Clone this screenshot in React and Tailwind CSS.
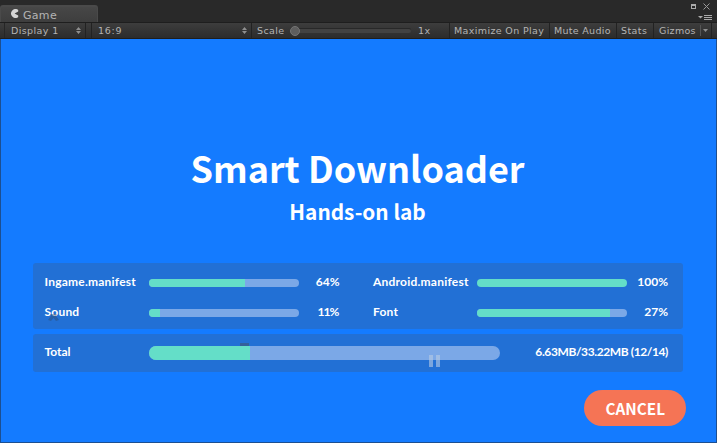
import React from 'react';

const ui = "font-['DejaVu_Sans',sans-serif] text-[#b4b4b4] whitespace-nowrap";

function UpDown() {
  return (
    <svg width="5" height="7" viewBox="0 0 5 7" fill="#8f8f8f" className="shrink-0">
      <path d="M0 3 L2.5 0 L5 3Z M0 4 L5 4 L2.5 7Z" />
    </svg>
  );
}

function TabStrip() {
  return (
    <div className="flex h-[22px] justify-between bg-[#292929]">
      <div className="mt-[5px] flex h-[17px] w-[98px] items-center rounded-t-[3px] border-x border-t-2 border-[#4a4a4a] bg-gradient-to-b from-[#474747] to-[#3e3e3e] pl-[9px]">
        <svg width="9" height="9" viewBox="0 0 9 9" className="mb-[3px]" fill="#d6d6d6">
          <path d="M8.2 1 A4.4 4.4 0 1 0 8.2 8 L8.2 6.5 L4.6 4.5 L8.2 2.5Z" />
        </svg>
        <span className={`${ui} ml-[4px] mt-[2px] text-[11px] leading-[14px] tracking-[0.3px]`}>Game</span>
      </div>
      <div className="flex w-[30px] flex-col pt-[3px]">
        <svg width="30" height="19" viewBox="0 0 30 19" fill="none">
          <rect x="4.5" y="1.5" width="4" height="4" stroke="#aaa" />
          <path d="M4 2H9" stroke="#aaa" strokeWidth="2" />
          <path d="M16.5 .5L22.5 6.5M22.5 .5L16.5 6.5" stroke="#999" />
          <path d="M11 13H16L13.5 15.5Z" fill="#aaa" />
          <path d="M17 12.5H25M17 14.5H25M17 16.5H25" stroke="#aaa" />
        </svg>
      </div>
    </div>
  );
}

function Toolbar() {
  const text = `${ui} text-[9.5px] leading-[16px]`;
  return (
    <div className="flex h-[17px] border-y border-[#1e1e1e] bg-gradient-to-b from-[#3d3d3d] to-[#2c2c2c]">
      <div className="w-[5px] border-r border-[#262626]" />
      <div className={`${text} flex w-[81px] items-center justify-between border-r border-[#222] pl-[6px] pr-[4px]`}>
        <span className="tracking-[0.4px]">Display 1</span>
        <UpDown />
      </div>
      <div className="w-[6px] border-r border-[#222]" />
      <div className={`${text} flex w-[160px] items-center justify-between border-r border-[#222] pl-[6px] pr-[4px]`}>
        <span className="tracking-[0.7px]">16:9</span>
        <UpDown />
      </div>
      <div className={`${text} flex w-[198px] items-center border-r border-[#222] pl-[5px]`}>
        <span className="w-[33px] pt-px tracking-[0.4px]">Scale</span>
        <div className="flex h-[4px] w-[121px] items-center rounded-full bg-[#424242] shadow-[0_-1px_0_#282828]">
          <div className="h-[10px] w-[10px] rounded-full border border-[#757575] bg-[#5e5e5e]" />
        </div>
        <span className="ml-[7px] pt-px tracking-[0.5px]">1x</span>
      </div>
      <div className={`${text} w-[100px] border-r border-[#222] pl-[4px] tracking-[0.37px]`}>Maximize On Play</div>
      <div className={`${text} w-[67px] border-r border-[#222] pl-[4px] tracking-[0.3px]`}>Mute Audio</div>
      <div className={`${text} w-[37px] border-r border-[#222] pl-[4px] tracking-[0.4px]`}>Stats</div>
      <div className={`${text} flex w-[58px] items-center border-r border-[#222] pl-[5px]`}>
        <span className="w-[41px] tracking-[0.3px]">Gizmos</span>
        <span className="h-[11px] w-px bg-[#555]" />
        <svg width="5" height="3" viewBox="0 0 5 3" className="ml-[2px]" fill="#8f8f8f">
          <path d="M0 0H5L2.5 3Z" />
        </svg>
      </div>
    </div>
  );
}

function Bar({ fill, className }) {
  return (
    <div className={`shrink-0 overflow-hidden rounded-full bg-[#7ba8e7] ${className}`}>
      <div className="h-full bg-[#64dec8]" style={{ width: fill }} />
    </div>
  );
}

const label = "font-['Lato','Noto_Sans_CJK_KR',sans-serif] font-bold text-[12px] leading-[16px] text-white whitespace-nowrap";

function Item({ name, fill, percent, first, tight }) {
  return (
    <div className={`${label} flex h-[16px] items-center ${first ? 'w-[328.5px]' : 'w-[299px]'}`}>
      <span className="w-[104px] shrink-0 tracking-[0.22px]">{name}</span>
      <Bar fill={fill} className="mt-[2px] h-[8px] w-[150px]" />
      <span className={`w-[41px] text-right ${tight ? 'pr-px tracking-[-0.9px]' : ''}`}>{percent}</span>
    </div>
  );
}

export default function App() {
  return (
    <div className="flex h-[443px] w-[717px] flex-col overflow-hidden bg-[#292929]">
      <TabStrip />
      <Toolbar />
      <main className="relative flex h-[404px] flex-col border-x border-b border-[#1c4f91] bg-[#147bff] font-['Noto_Sans_CJK_KR',sans-serif] text-white">
        <h1 className="mt-[103px] h-[50px] pr-[2px] text-center text-[36px] font-bold leading-[50px]">Smart Downloader</h1>
        <h2 className="mt-[4px] h-[30px] pr-[2px] text-center text-[20.8px] font-bold leading-[30px]">Hands-on lab</h2>
        <section className="ml-[32px] mt-[36.5px] h-[66px] w-[650px] rounded-[3px] bg-[#2270d5] pl-[11.5px] pt-[11.5px]">
          <div className="flex">
            <Item first name="Ingame.manifest" fill="96px" percent="64%" />
            <Item name="Android.manifest" fill="150px" percent="100%" />
          </div>
          <div className="mt-[14px] flex">
            <Item first tight name="Sound" fill="11px" percent="11%" />
            <Item name="Font" fill="133px" percent="27%" />
          </div>
        </section>
        <section className={`${label} ml-[32px] mt-[5px] flex h-[38px] w-[650px] items-center rounded-[3px] bg-[#2270d5] pl-[11.5px] pr-[15px]`}>
          <span className="mb-[2px] w-[104px]">Total</span>
          <Bar fill="101px" className="h-[14px] w-[351.5px]" />
          <span className="mb-[2px] ml-auto tracking-[-0.4px]">6.63MB/33.22MB (12/14)</span>
        </section>
        <button className="ml-[583.4px] mt-[18.5px] h-[36px] w-[101.8px] rounded-full bg-[#f57455] text-[15.3px] font-bold leading-[36px]">CANCEL</button>
        <svg className="absolute left-[47px] top-[275px]" width="12" height="8" viewBox="0 0 12 8" fill="#33475f" fillOpacity=".4">
          <path d="M2 0H9L8 2L11 6L8 7L5.5 4L3 7L0 6L3 2Z" />
        </svg>
        <div className="absolute left-[239px] top-[304px] h-[3px] w-[9px] bg-[#34609b]" />
        <div className="absolute left-[428px] top-[316px] flex h-[12px] gap-[3px] opacity-60">
          <div className="w-[4px] bg-[#b7cbe5]" />
          <div className="w-[4px] bg-[#b7cbe5]" />
        </div>
      </main>
    </div>
  );
}
